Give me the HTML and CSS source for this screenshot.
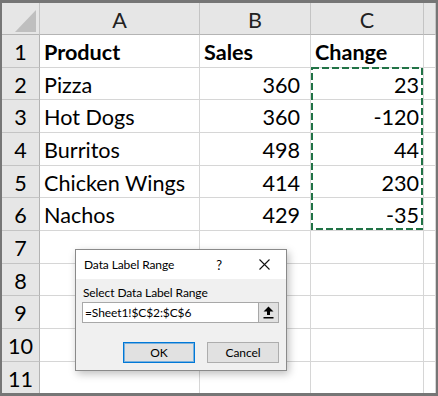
FILE: index.html
```html
<!DOCTYPE html>
<html lang="en">
<head>
<meta charset="UTF-8">
<title>Data Label Range</title>
<link rel="stylesheet" href="styles.css">
</head>
<body>

<div class="sheet">
  <div class="row head">
    <div class="cell corner">
      <svg width="38" height="32" viewBox="0 0 38 32"><polygon points="13,29 34,7 34,29" fill="#bfbfbf"/></svg>
    </div>
    <div class="cell col">A</div>
    <div class="cell col">B</div>
    <div class="cell col">C</div>
    <div class="cell col"></div>
  </div>
  <div class="row">
    <div class="cell num">1</div>
    <div class="cell bold">Product</div>
    <div class="cell bold">Sales</div>
    <div class="cell bold">Change</div>
    <div class="cell"></div>
  </div>
  <div class="row">
    <div class="cell num">2</div>
    <div class="cell">Pizza</div>
    <div class="cell val">360</div>
    <div class="cell val last">23</div>
    <div class="cell"></div>
  </div>
  <div class="row">
    <div class="cell num">3</div>
    <div class="cell">Hot Dogs</div>
    <div class="cell val">360</div>
    <div class="cell val last">-120</div>
    <div class="cell"></div>
  </div>
  <div class="row">
    <div class="cell num">4</div>
    <div class="cell">Burritos</div>
    <div class="cell val">498</div>
    <div class="cell val last">44</div>
    <div class="cell"></div>
  </div>
  <div class="row">
    <div class="cell num">5</div>
    <div class="cell">Chicken Wings</div>
    <div class="cell val">414</div>
    <div class="cell val last">230</div>
    <div class="cell"></div>
  </div>
  <div class="row">
    <div class="cell num">6</div>
    <div class="cell">Nachos</div>
    <div class="cell val">429</div>
    <div class="cell val last">-35</div>
    <div class="cell"></div>
  </div>
  <div class="row">
    <div class="cell num">7</div>
    <div class="cell"></div><div class="cell"></div><div class="cell"></div><div class="cell"></div>
  </div>
  <div class="row">
    <div class="cell num">8</div>
    <div class="cell"></div><div class="cell"></div><div class="cell"></div><div class="cell"></div>
  </div>
  <div class="row">
    <div class="cell num">9</div>
    <div class="cell"></div><div class="cell"></div><div class="cell"></div><div class="cell"></div>
  </div>
  <div class="row">
    <div class="cell num">10</div>
    <div class="cell"></div><div class="cell"></div><div class="cell"></div><div class="cell"></div>
  </div>
  <div class="row">
    <div class="cell num">11</div>
    <div class="cell"></div><div class="cell"></div><div class="cell"></div><div class="cell"></div>
  </div>

  <!-- copy marquee round C2:C6 -->
  <svg class="marquee" width="113" height="164" viewBox="0 0 113 164">
    <rect x="1" y="1" width="110" height="161" fill="none" stroke="#217346" stroke-width="2" stroke-dasharray="7 3"/>
  </svg>

  <div class="dialog">
    <div class="titlebar">
      <span class="title">Data Label Range</span>
      <span class="help">?</span>
      <span class="close">
        <svg width="11" height="11" viewBox="0 0 11 11"><path d="M0.5 0.5 L10.5 10.5 M10.5 0.5 L0.5 10.5" stroke="#111" stroke-width="1.1" fill="none"/></svg>
      </span>
    </div>
    <div class="dlg-body">
      <div class="label">Select Data Label Range</div>
      <div class="refedit">
        <div class="field">=Sheet1!$C$2:$C$6</div>
        <div class="collapse">
          <svg width="11" height="13" viewBox="0 0 11 13"><path d="M5.5 0.5 L10.5 5.5 L7 5.5 L7 9 L4 9 L4 5.5 L0.5 5.5 Z" fill="#000"/><rect x="0.5" y="11" width="10" height="1.5" fill="#000"/></svg>
        </div>
      </div>
      <div class="buttons">
        <div class="btn default">OK</div>
        <div class="btn">Cancel</div>
      </div>
    </div>
  </div>
</div>

</body>
</html>
```

FILE: styles.css
```css
/* Spreadsheet with the data label range dialog */
body {
  margin: 0;
  padding: 0;
  background-color: #fff;
}
.sheet {
  position: relative;
  width: 438px;
  height: 396px;
  box-sizing: border-box;
  border: 2px solid #767676;
  border-top-width: 3px;
  border-bottom-width: 3px;
  overflow: hidden;
  background-color: #fff;
  font-family: Lato, "Liberation Sans", sans-serif;
  font-size: 21.6px;
  color: #000;
}
.row {
  display: grid;
  grid-template-columns: 38px 160px 111px 113px 1fr;
  height: 32.67px;
}
.row.head {
  height: 32px;
}
.cell {
  box-sizing: border-box;
  border-right: 1px solid #d6d6d6;
  border-bottom: 1px solid #d6d6d6;
  padding: 3px 4px 0 4px;
  line-height: 29px;
  white-space: nowrap;
  overflow: hidden;
}
.head .cell {
  background-color: #e6e6e6;
  border-right-color: #c4c4c4;
  border-bottom-color: #b4b4b4;
  text-align: center;
  color: #222;
}
.cell.corner {
  padding: 0;
}
.cell.corner svg {
  display: block;
}
.cell.num {
  background-color: #e6e6e6;
  border-right-color: #b4b4b4;
  border-bottom-color: #c4c4c4;
  text-align: center;
  padding-left: 0;
  padding-right: 0;
}
.cell.bold {
  font-weight: bold;
}
.cell.val {
  text-align: right;
  padding-right: 10px;
}
.cell.val.last {
  padding-right: 4px;
}
.marquee {
  position: absolute;
  left: 309px;
  top: 64px;
}

/* dialog */
.dialog {
  position: absolute;
  left: 73px;
  top: 246px;
  width: 212px;
  height: 122px;
  box-sizing: border-box;
  border: 1px solid #8a8a8a;
  background-color: #f0f0f0;
  box-shadow: 2px 3px 8px rgba(0, 0, 0, 0.25);
  display: flex;
  flex-direction: column;
  font-size: 12px;
  letter-spacing: -0.1px;
  color: #000;
}
.titlebar {
  height: 29px;
  background-color: #fff;
  display: flex;
  align-items: center;
  padding-left: 8px;
  padding-right: 7px;
}
.title {
  flex: 1;
}
.help {
  width: 20px;
  text-align: center;
  font-size: 13px;
  margin-right: 20px;
}
.close {
  width: 30px;
  display: flex;
  justify-content: center;
}
.close svg {
  display: block;
}
.dlg-body {
  padding: 6px 6px 0 6px;
}
.label {
  line-height: 16px;
  padding-left: 1px;
}
.refedit {
  margin-top: 1px;
  height: 21px;
  display: flex;
  margin-right: 1px;
}
.field {
  flex: 1;
  box-sizing: border-box;
  border: 1px solid #a8a8a8;
  border-right: none;
  background-color: #fff;
  line-height: 19px;
  padding-left: 2px;
}
.collapse {
  width: 21px;
  box-sizing: border-box;
  border: 1px solid #a8a8a8;
  background-color: #e1e1e1;
  display: flex;
  align-items: center;
  justify-content: center;
}
.collapse svg {
  display: block;
}
.buttons {
  margin-top: 19px;
  display: flex;
  justify-content: flex-end;
  gap: 12px;
  padding-right: 1px;
}
.btn {
  width: 72px;
  height: 21px;
  box-sizing: border-box;
  border: 1px solid #adadad;
  background-color: #e1e1e1;
  text-align: center;
  line-height: 19px;
}
.btn.default {
  border-color: #0078d7;
  box-shadow: inset 0 0 0 1px rgba(0, 120, 215, 0.45);
}
```
